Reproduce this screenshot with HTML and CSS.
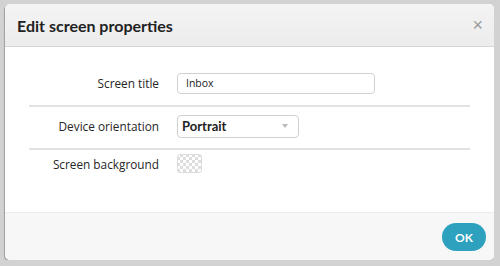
FILE: index.html
```html
<!DOCTYPE html>
<html lang="en">
<head>
  <meta charset="UTF-8" />
  <title>Edit screen properties</title>
  <link rel="stylesheet" href="styles.css">
</head>
<body>

  <div class="modal">
    <div class="modal-header">
      <h3>Edit screen properties</h3>
      <span class="close">&times;</span>
    </div>

    <div class="modal-body">
      <div class="row">
        <label>Screen title</label>
        <input type="text" value="Inbox" />
      </div>
      <div class="row">
        <label>Device orientation</label>
        <div class="select">
          <span>Portrait</span>
          <span class="caret"></span>
        </div>
      </div>
      <div class="row">
        <label>Screen background</label>
        <div class="swatch"></div>
      </div>
    </div>

    <div class="modal-footer">
      <button>OK</button>
    </div>
  </div>

</body>
</html>
```

FILE: styles.css
```css
body {
  margin: 0;
  background-color: #d2d2d2;
  font-family: Lato, "Liberation Sans", sans-serif;
  color: #333;
}

.modal {
  margin: 4px 6px 0 5px;
  height: 256px;
  background: white;
  border-radius: 5px;
  box-shadow: -1px 1px 1px rgba(0,0,0,0.25);
  display: flex;
  flex-direction: column;
  overflow: hidden;
}

.modal-header {
  height: 42px;
  background: linear-gradient(#f4f4f4, #ececec);
  border-bottom: 1px solid #d6d6d6;
  display: flex;
  align-items: center;
  justify-content: space-between;
  padding: 0 11px 0 12px;
}

.modal-header h3 {
  margin: 0;
  font-family: Lato, "Liberation Sans", sans-serif;
  font-size: 16px;
  font-weight: bold;
  color: #222;
}

.close {
  font-family: "Liberation Sans", sans-serif;
  font-size: 18px;
  color: #999;
}

.modal-body {
  flex: 1;
  padding: 17px 24px 0 24px;
}

.row {
  display: flex;
  align-items: center;
  height: 38px;
  padding-bottom: 3px;
  border-bottom: 2px solid #e2e2e2;
}

.row:last-child {
  height: 27px;
  border-bottom: none;
}

.row label {
  width: 130px;
  text-align: right;
  margin-right: 18px;
  font-family: "Open Sans", "Liberation Sans", sans-serif;
  font-size: 11.8px;
  color: #262626;
}

input[type="text"] {
  width: 180px;
  height: 19px;
  padding: 0 8px;
  border: 1px solid #d0d0d0;
  border-radius: 4px;
  font-family: "Open Sans", "Liberation Sans", sans-serif;
  font-size: 10.5px;
  color: #222;
}

.select {
  width: 112px;
  height: 21px;
  padding: 0 4px;
  border: 1px solid #d0d0d0;
  border-radius: 4px;
  display: flex;
  align-items: center;
  justify-content: space-between;
  font-size: 13px;
  font-weight: bold;
  color: #222;
}

.caret {
  border-left: 3px solid transparent;
  border-right: 3px solid transparent;
  border-top: 4px solid #bbb;
  margin-right: 6px;
}

.swatch {
  width: 23px;
  height: 17px;
  border: 1px solid #ddd;
  border-radius: 3px;
  background-color: #fff;
  background-image:
    linear-gradient(45deg, #ddd 25%, transparent 25%, transparent 75%, #ddd 75%),
    linear-gradient(45deg, #ddd 25%, transparent 25%, transparent 75%, #ddd 75%);
  background-size: 6px 6px;
  background-position: 2px 2px, 5px 5px;
}

.modal-footer {
  height: 47px;
  background: #f7f7f7;
  border-top: 1px solid #ececec;
  display: flex;
  align-items: center;
  justify-content: flex-end;
  padding-right: 8px;
}

button {
  background-color: #2ea1bf;
  color: white;
  border: none;
  width: 44px;
  height: 28px;
  border-radius: 14px;
  font-family: Lato, "Liberation Sans", sans-serif;
  font-size: 12px;
  font-weight: bold;
  margin-top: 1px;
}
```
